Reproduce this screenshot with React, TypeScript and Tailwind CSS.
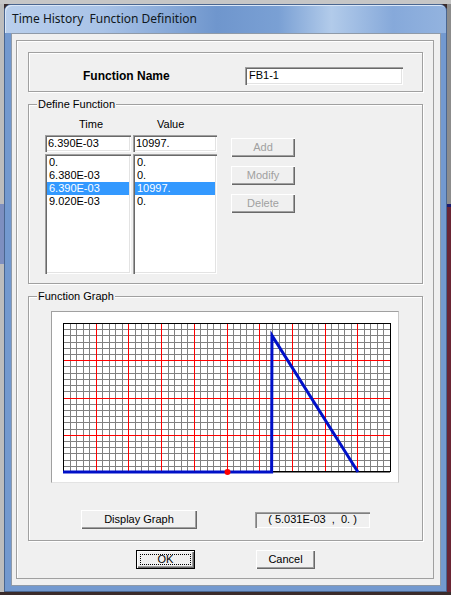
import React from 'react';

const GRID_W = 327;
const GRID_H = 149;
const COLS = 50;
const ROWS = 24;

const raised =
  'shadow-[inset_1px_1px_0_#ffffff,inset_-1px_-1px_0_#696969,inset_-2px_-2px_0_#a0a0a0]';
const sunken =
  'shadow-[inset_1px_1px_0_#a0a0a0,inset_2px_2px_0_#696969,inset_-1px_-1px_0_#ffffff,inset_-2px_-2px_0_#e3e3e3]';
const etched = 'border border-[#a0a0a0] shadow-[inset_1px_1px_0_#ffffff,1px_1px_0_#ffffff]';

const GraphGrid: React.FC = () => {
  const xs = Array.from({ length: COLS + 1 }, (_, i) => Math.round((i * GRID_W) / COLS) + 0.5);
  const ys = Array.from({ length: ROWS + 1 }, (_, i) => Math.round((i * GRID_H) / ROWS) + 0.5);
  const xMax = 0.01;
  const yMax = 12000;
  const px = (t: number) => (t / xMax) * GRID_W;
  const py = (v: number) => GRID_H - (v / yMax) * GRID_H;
  const pts = [
    [0, 0],
    [6.38e-3, 0],
    [6.39e-3, 10997],
    [9.02e-3, 0],
  ]
    .map(([t, v]) => `${px(t)},${py(v)}`)
    .join(' ');

  return (
    <svg width={GRID_W} height={GRID_H} className="block overflow-visible">
      {xs.map((x, i) => (
        <line key={'gx' + i} x1={x} y1={0} x2={x} y2={GRID_H} stroke="#808080" strokeWidth={1} />
      ))}
      {ys.map((y, i) => (
        <line key={'gy' + i} x1={0} y1={y} x2={GRID_W} y2={y} stroke="#808080" strokeWidth={1} />
      ))}
      {xs.map((x, i) =>
        i % 5 === 0 && i > 0 && i < COLS ? (
          <line key={'rx' + i} x1={x} y1={0} x2={x} y2={GRID_H} stroke="#ff0000" strokeWidth={1} />
        ) : null
      )}
      {ys.map((y, i) =>
        i % 6 === 0 && i > 0 && i < ROWS ? (
          <line key={'ry' + i} x1={0} y1={y} x2={GRID_W} y2={y} stroke="#ff0000" strokeWidth={1} />
        ) : null
      )}
      <rect x={0.5} y={0.5} width={GRID_W} height={GRID_H - 1} fill="none" stroke="#000000" strokeWidth={1} />
      <polyline points={pts} fill="none" stroke="#0010c8" strokeWidth={3} strokeLinejoin="miter" />
      <circle cx={px(5.031e-3)} cy={GRID_H} r={3} fill="#ff0000" />
    </svg>
  );
};

const Btn: React.FC<{ label: string; disabled?: boolean; className?: string }> = ({
  label,
  disabled,
  className = '',
}) => (
  <div
    className={`flex items-center justify-center bg-[#f0f0f0] ${raised} ${
      disabled ? 'text-[#a0a0a0]' : 'text-black'
    } ${className}`}
  >
    {label}
  </div>
);

export default function App() {
  const rows = [
    ['0.', '0.'],
    ['6.380E-03', '0.'],
    ['6.390E-03', '10997.'],
    ['9.020E-03', '0.'],
  ];
  const selected = 2;

  return (
    <div className="w-[451px] h-[595px] bg-[#3a2b2b] flex flex-col overflow-hidden font-[Liberation_Sans,Arial,sans-serif] text-[11px] leading-[13px] text-black">
      <div className="h-[4px] bg-[#c6c6c6]" />
      <div className="flex flex-row">
        <div className="w-[4px] h-[588px] bg-[#bdbdbd] flex flex-col">
          <div className="h-[200px]" />
          <div className="h-[60px] bg-[#7d8fc0]" />
        </div>

        {/* window */}
        <div className="w-[443px] h-[588px] rounded-t-[7px] border border-[#4a6690] bg-[#7399cf] flex flex-col">
          <div className="h-[28px] rounded-t-[6px] flex items-center pl-[7px] pb-[1px] bg-[linear-gradient(to_right,#b9cfec_0%,#a9c3e7_22%,#6f96cd_48%,#7aa0d4_62%,#b2cbea_74%,#86a9da_88%,#93b3df_100%)] shadow-[inset_1px_1px_0_#dbe7f6]">
            <span className="font-[Noto_Sans,Open_Sans,sans-serif] text-[12px] leading-[16px] whitespace-pre text-[#101820]">
              Time History  Function Definition
            </span>
          </div>

          {/* client */}
          <div className="ml-[6px] mr-[5px] h-[553px] bg-[#f0f0f0] border border-[#8f9aa8] pl-[4px] pr-[6px] pt-[6px] pb-[6px]">
            <div className="h-full border border-[#a0a0a0] shadow-[inset_1px_1px_0_#ffffff] flex flex-col px-[10px] pl-[11px] pt-[11px]">
              {/* Function name */}
              <div className={`h-[40px] ${etched} flex flex-row items-center pt-[7px]`}>
                <span className="ml-[54px] w-[162px] font-bold text-[12px] leading-[14px]">Function Name</span>
                <div className={`w-[158px] h-[18px] bg-white ${sunken} pl-[4px] flex items-center`}>FB1-1</div>
              </div>

              {/* Define function */}
              <div className={`relative mt-[12px] h-[180px] ${etched} flex flex-row`}>
                <span className="absolute -top-[7px] left-[8px] bg-[#f0f0f0] px-[1px]">Define Function</span>
                <div className="ml-[16px] flex flex-col">
                  <div className="mt-[13px] h-[13px] flex flex-row">
                    <span className="w-[88px] pl-[34px]">Time</span>
                    <span className="pl-[24px]">Value</span>
                  </div>
                  <div className="mt-[4px] flex flex-row gap-[2px]">
                    <div className={`w-[86px] h-[17px] bg-white ${sunken} pl-[3px] flex items-center`}>6.390E-03</div>
                    <div className={`w-[84px] h-[17px] bg-white ${sunken} pl-[3px] flex items-center`}>10997.</div>
                  </div>
                  <div className="mt-[2px] flex flex-row gap-[2px]">
                    {[0, 1].map((c) => (
                      <div
                        key={c}
                        className={`${c === 0 ? 'w-[86px]' : 'w-[84px]'} h-[120px] bg-white ${sunken} p-[2px] pt-[2px] flex flex-col`}
                      >
                        {rows.map((r, i) => (
                          <div
                            key={i}
                            className={`h-[13px] pl-[2px] ${i === selected ? 'bg-[#3399ff] text-white' : ''}`}
                          >
                            {r[c]}
                          </div>
                        ))}
                      </div>
                    ))}
                  </div>
                </div>
                <div className="ml-[14px] mt-[33px] flex flex-col gap-[9px]">
                  <Btn label="Add" disabled className="w-[64px] h-[19px]" />
                  <Btn label="Modify" disabled className="w-[64px] h-[19px]" />
                  <Btn label="Delete" disabled className="w-[64px] h-[19px]" />
                </div>
              </div>

              {/* Function graph */}
              <div className={`relative mt-[12px] h-[245px] ${etched} flex flex-col`}>
                <span className="absolute -top-[7px] left-[8px] bg-[#f0f0f0] px-[1px]">Function Graph</span>
                <div className="ml-[22px] mt-[14px] w-[348px] h-[172px] bg-white border border-t-[#a0a0a0] border-l-[#a0a0a0] border-b-[#e3e3e3] border-r-[#c8c8c8] pl-[11px] pt-[11px]">
                  <GraphGrid />
                </div>
                <div className="mt-[27px] flex flex-row items-center">
                  <Btn label="Display Graph" className="ml-[52px] w-[116px] h-[19px] text-[11px]" />
                  <div
                    className={`ml-[58px] w-[115px] h-[16px] bg-[#f0f0f0] shadow-[inset_1px_1px_0_#a0a0a0,inset_2px_2px_0_#808080,inset_-1px_-1px_0_#ffffff] flex items-center justify-center whitespace-pre`}
                  >
                    ( 5.031E-03  ,  0. )
                  </div>
                </div>
              </div>

              {/* OK / Cancel */}
              <div className="mt-[9px] flex flex-row">
                <div className="ml-[108px] w-[59px] h-[19px] border border-black bg-[#f0f0f0] shadow-[inset_1px_1px_0_#ffffff,inset_-1px_-1px_0_#696969,inset_-2px_-2px_0_#a0a0a0] p-[3px]">
                  <div className="h-full border border-dotted border-black flex items-center justify-center leading-[11px]">
                    OK
                  </div>
                </div>
                <Btn label="Cancel" className="ml-[61px] w-[59px] h-[19px]" />
              </div>
            </div>
          </div>
        </div>

        <div className="w-[4px] h-[588px] bg-[#8c8c8c] flex flex-col">
          <div className="h-[200px]" />
          <div className="h-[3px] bg-[#1a1a70]" />
          <div className="flex-1 bg-[#6a2434]" />
        </div>
      </div>
    </div>
  );
}
